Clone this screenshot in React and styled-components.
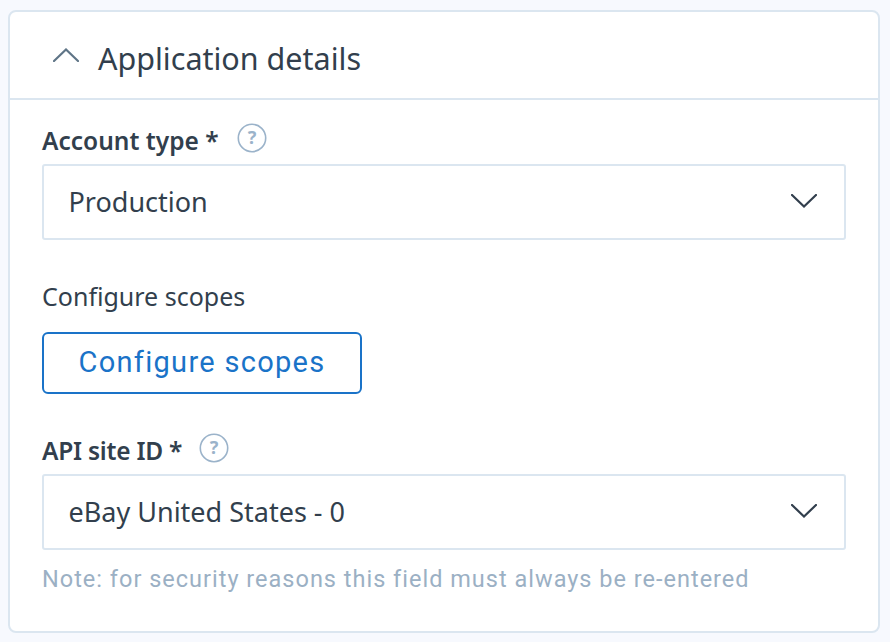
import React from 'react';
import styled, { createGlobalStyle } from 'styled-components';

const GlobalStyle = createGlobalStyle`
  html, body {
    margin: 0;
    padding: 0;
    background: #f7f9fe;
  }
  body {
    font-family: "Noto Sans", "Open Sans", sans-serif;
    color: #323f4d;
  }
`;

const Page = styled.div`
  padding: 10px 10px 9px 8px;
`;

const Card = styled.section`
  background: #fff;
  border: 2px solid #dbe6f0;
  border-radius: 8px;
  height: 623px;
  box-sizing: border-box;
`;

const CardHeader = styled.header`
  height: 88px;
  box-sizing: border-box;
  border-bottom: 2px solid #dbe6f0;
  display: flex;
  align-items: center;
  padding: 0 0 0 43px;
  gap: 19px;
`;

const Title = styled.h2`
  margin: 6px 0 0;
  font-size: 30.5px;
  line-height: 40px;
  font-weight: 400;
  color: #323f4d;
`;

const CardBody = styled.div`
  padding: 26px 32px 0;
`;

const Field = styled.div`
  margin-bottom: ${(p) => p.$mb || 0}px;
`;

const LabelRow = styled.div`
  display: flex;
  align-items: center;
  height: 30px;
  gap: ${(p) => p.$gap}px;
  margin-bottom: 8px;
`;

const Label = styled.label`
  font-size: 24.5px;
  line-height: 30px;
  font-weight: 600;
  letter-spacing: ${(p) => p.$spacing || 0}px;
  color: #323f4d;
`;

const HelpWrap = styled.span`
  display: flex;
  margin-bottom: 6px;
`;

const SelectBox = styled.div`
  height: 76px;
  box-sizing: border-box;
  border: 2px solid #dbe6f0;
  border-radius: 3px;
  display: flex;
  align-items: center;
  justify-content: space-between;
  padding: 0 27px 2px 24.5px;
  font-size: 27px;
  color: #323f4d;
`;

const PlainLabel = styled.div`
  font-size: 25px;
  line-height: 30px;
  color: #323f4d;
  margin: -1px 0 21px;
`;

const OutlineButton = styled.button`
  display: block;
  width: 320px;
  height: 62px;
  box-sizing: border-box;
  background: #fff;
  border: 2px solid #1a73c8;
  border-radius: 6px;
  color: #1a73c8;
  font-family: Roboto, "Liberation Sans", sans-serif;
  font-size: 29px;
  letter-spacing: 1.3px;
  padding: 0 0 2px;
  cursor: pointer;
`;

const Note = styled.p`
  margin: 15px 0 0;
  font-family: Roboto, "Liberation Sans", sans-serif;
  font-size: 23.5px;
  line-height: 28px;
  letter-spacing: 1px;
  color: #9bb0c4;
`;

const ChevronIcon = ({ up, color }) => (
  <svg width="26" height="14" viewBox="0 0 26 14" fill="none">
    <path
      d={up ? 'M1 13 L13 1.5 L25 13' : 'M1 1 L13 12.5 L25 1'}
      stroke={color}
      strokeWidth="2.2"
      strokeLinecap="round"
    />
  </svg>
);

const HelpIcon = () => (
  <HelpWrap>
    <svg width="30" height="30" viewBox="0 0 30 30">
      <circle cx="15" cy="15" r="13.7" fill="none" stroke="#9bb3ca" strokeWidth="1.6" />
      <text x="15" y="21" textAnchor="middle" fontSize="18" fontWeight="700" fontFamily="Noto Sans, sans-serif" fill="#9bb3ca">?</text>
    </svg>
  </HelpWrap>
);

const Select = ({ value }) => (
  <SelectBox>
    <span>{value}</span>
    <ChevronIcon color="#323f4d" />
  </SelectBox>
);

export default function App() {
  return (
    <Page>
      <GlobalStyle />
      <Card>
        <CardHeader>
          <ChevronIcon up color="#5f7587" />
          <Title>Application details</Title>
        </CardHeader>
        <CardBody>
          <Field $mb={42}>
            <LabelRow $gap={18}>
              <Label>Account type *</Label>
              <HelpIcon />
            </LabelRow>
            <Select value="Production" />
          </Field>
          <Field $mb={42}>
            <PlainLabel>Configure scopes</PlainLabel>
            <OutlineButton>Configure scopes</OutlineButton>
          </Field>
          <Field>
            <LabelRow $gap={17}>
              <Label $spacing={-0.25}>API site ID *</Label>
              <HelpIcon />
            </LabelRow>
            <Select value="eBay United States - 0" />
            <Note>Note: for security reasons this field must always be re-entered</Note>
          </Field>
        </CardBody>
      </Card>
    </Page>
  );
}
